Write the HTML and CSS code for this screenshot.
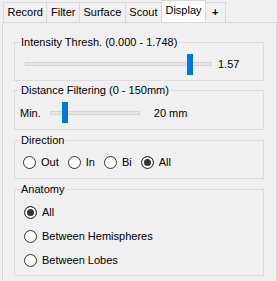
FILE: index.html
```html
<!DOCTYPE html>
<html lang="en">
<head>
    <meta charset="UTF-8">
    <meta name="viewport" content="width=device-width, initial-scale=1.0">
    <title>Display</title>
    <link rel="stylesheet" href="styles.css">
</head>
<body>
    <div class="tabs">
        <div class="tab">Record</div>
        <div class="tab">Filter</div>
        <div class="tab">Surface</div>
        <div class="tab">Scout</div>
        <div class="tab active">Display</div>
        <div class="tab plus">+</div>
    </div>

    <div class="page">
        <fieldset class="group">
            <legend>Intensity Thresh. (0.000 - 1.748)</legend>
            <div class="slider-row">
                <input type="range" class="slider slider-wide" min="0" max="1.748" step="0.001" value="1.57">
                <span class="value">1.57</span>
            </div>
        </fieldset>

        <fieldset class="group group-distance">
            <legend>Distance Filtering (0 - 150mm)</legend>
            <div class="slider-row">
                <span class="caption">Min.</span>
                <input type="range" class="slider slider-short" min="0" max="150" step="1" value="20">
                <span class="value value-far">20 mm</span>
            </div>
        </fieldset>

        <fieldset class="group">
            <legend>Direction</legend>
            <div class="radio-row">
                <label class="radio"><input type="radio" name="dir"> Out</label>
                <label class="radio"><input type="radio" name="dir"> In</label>
                <label class="radio"><input type="radio" name="dir"> Bi</label>
                <label class="radio"><input type="radio" name="dir" checked> All</label>
            </div>
        </fieldset>

        <fieldset class="group group-anatomy">
            <legend>Anatomy</legend>
            <div class="radio-list">
                <label class="radio"><input type="radio" name="anat" checked> All</label>
                <label class="radio"><input type="radio" name="anat"> Between Hemispheres</label>
                <label class="radio"><input type="radio" name="anat"> Between Lobes</label>
            </div>
        </fieldset>
    </div>
</body>
</html>
```

FILE: styles.css
```css
* {
    box-sizing: border-box;
}
body {
    margin: 0;
    height: 100vh;
    overflow: hidden;
    background-color: #f0f0f0;
    font-family: 'Liberation Sans', Arial, sans-serif;
    font-size: 11px;
    color: #000;
}

/* tab strip */
.tabs {
    display: flex;
    align-items: flex-end;
    height: 22px;
    padding-left: 3px;
}
.tab {
    height: 20px;
    line-height: 18px;
    padding: 0 3.5px;
    margin-left: -1px;
    border: 1px solid #d9d9d9;
    border-bottom: none;
    background-color: #f0f0f0;
    white-space: nowrap;
}
.tab:first-child {
    margin-left: 0;
}
.tab.active {
    height: 22px;
    background-color: #fff;
    position: relative;
    z-index: 1;
}
.tab.plus {
    padding: 0 6px;
    font-weight: bold;
}

/* tab page (runs past the bottom of the window) */
.page {
    height: calc(100vh - 22px);
    margin-left: 2px;
    border: 1px solid #d9d9d9;
    border-bottom: none;
    padding: 12px 12px 0 11px;
}

.group {
    margin: 3px 0 0;
    padding: 4px 5px 5px;
    border: 1px solid #dcdcdc;
    min-width: 0;
}
.group:first-child {
    margin-top: 0;
}
.group legend {
    padding: 0 1px;
    line-height: 14px;
}
.group-distance {
    margin-top: 2px;
}
.group-distance .slider-row {
    height: 23px;
}
.group-anatomy {
    padding-bottom: 3px;
}

/* sliders */
.slider-row {
    display: flex;
    align-items: center;
    height: 22px;
}
.slider {
    -webkit-appearance: none;
    appearance: none;
    background: transparent;
    height: 21px;
    margin: 0;
}
.slider::-webkit-slider-runnable-track {
    height: 4px;
    background-color: #e7e7e7;
    border: 1px solid #d6d6d6;
}
.slider::-webkit-slider-thumb {
    -webkit-appearance: none;
    width: 6px;
    height: 21px;
    margin-top: -9.5px;
    background-color: #0078d7;
    border: none;
}
.slider-wide {
    width: 187px;
    margin-left: 5px;
}
.slider-short {
    width: 90px;
    margin-left: 9px;
}
.value {
    margin-left: 6px;
}
.value-far {
    margin-left: 14px;
}

/* radios */
.radio-row {
    display: flex;
    gap: 9px;
    height: 22px;
    align-items: center;
    padding-left: 3px;
}
.radio-list {
    display: flex;
    flex-direction: column;
    padding-left: 4px;
}
.radio-list .radio {
    height: 24px;
}
.radio {
    display: flex;
    align-items: center;
    gap: 5px;
}
.radio input {
    -webkit-appearance: none;
    appearance: none;
    width: 13px;
    height: 13px;
    margin: 0;
    border: 1px solid #333;
    border-radius: 50%;
    background-color: #fff;
}
.radio input:checked {
    background-color: #333;
    box-shadow: inset 0 0 0 2px #fff;
}
```
